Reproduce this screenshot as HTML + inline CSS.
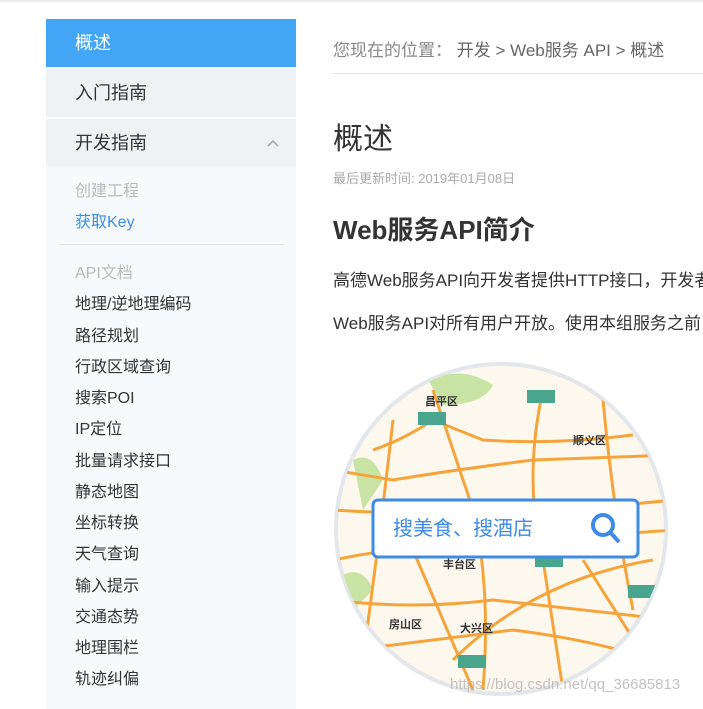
<!DOCTYPE html>
<html><head><meta charset="utf-8"><style>
body{margin:0;width:703px;height:704px;overflow:hidden;background:#fff;font-family:"Liberation Sans","Noto Sans CJK SC",sans-serif;position:relative}
.top{position:absolute;left:0;top:0;width:703px;height:4px;background:linear-gradient(#e8e8e8,#fff)}
.side{position:absolute;left:46px;top:19px;width:250px;height:690px;background:#f7fafd}
.it{position:absolute;left:0;width:250px;height:48px;line-height:48px;padding-left:29px;box-sizing:border-box;font-size:18px;color:#333;background:#eef2f5}
.s{position:absolute;left:29px;font-size:16px;color:#333;line-height:20px}
.g{color:#bbb}
.bc{position:absolute;left:333px;top:36px;font-size:17px;color:#888;white-space:nowrap}
.bc b{font-weight:normal;color:#666}
</style></head><body>
<div class="top"></div>
<div class="side">
<div class="it" style="top:0;background:#42a5f5;color:#fff">概述</div>
<div class="it" style="top:50px">入门指南</div>
<div class="it" style="top:100px">开发指南<svg style="position:absolute;right:17px;top:20px" width="12" height="8"><path d="M1 7L6 2L11 7" stroke="#aaa" stroke-width="1.6" fill="none"/></svg></div>
<div class="s g" style="top:163px">创建工程</div>
<div class="s" style="top:194px;color:#3a8ee6">获取Key</div>
<div style="position:absolute;left:13px;top:225px;width:225px;height:1px;background:#e2e8ee"></div>
<div class="s g" style="top:245px">API文档</div>
<div class="s" style="top:276px">地理/逆地理编码</div>
<div class="s" style="top:308px">路径规划</div>
<div class="s" style="top:339px">行政区域查询</div>
<div class="s" style="top:370px">搜索POI</div>
<div class="s" style="top:401px">IP定位</div>
<div class="s" style="top:433px">批量请求接口</div>
<div class="s" style="top:464px">静态地图</div>
<div class="s" style="top:495px">坐标转换</div>
<div class="s" style="top:526px">天气查询</div>
<div class="s" style="top:558px">输入提示</div>
<div class="s" style="top:589px">交通态势</div>
<div class="s" style="top:620px">地理围栏</div>
<div class="s" style="top:651px">轨迹纠偏</div>
</div>
<div class="bc">您现在的位置：&nbsp;<b>开发 &gt; Web服务 API &gt; 概述</b></div>
<div style="position:absolute;left:333px;top:73px;width:370px;height:1px;background:#e5e5e5"></div>
<div style="position:absolute;left:333px;top:114px;font-size:30px;color:#333">概述</div>
<div style="position:absolute;left:333px;top:168px;font-size:13px;color:#aaa">最后更新时间: 2019年01月08日</div>
<div style="position:absolute;left:333px;top:210px;font-size:26px;font-weight:bold;color:#333;white-space:nowrap">Web服务API简介</div>
<div style="position:absolute;left:333px;top:266px;font-size:17px;color:#333;white-space:nowrap">高德Web服务API向开发者提供HTTP接口，开发者</div>
<div style="position:absolute;left:333px;top:309px;font-size:17px;color:#333;white-space:nowrap">Web服务API对所有用户开放。使用本组服务之前</div>
<svg style="position:absolute;left:333px;top:360px" width="340" height="340">
<defs><clipPath id="c"><circle cx="168" cy="169" r="164"/></clipPath></defs>
<circle cx="168" cy="169" r="165" fill="#fdf8ee" stroke="#e3e6ea" stroke-width="4"/>
<g clip-path="url(#c)" fill="none" stroke="#f5a43c" stroke-width="3">
<path fill="#c9e3a4" stroke="none" d="M95 20Q130 5 160 25Q150 45 110 45Z M20 100Q40 90 50 120L30 150Z M10 215Q30 205 40 230L20 250Z"/>
<path d="M40 90Q70 80 100 60L150 80Q220 85 300 75"/>
<path d="M0 110L60 120Q120 110 200 100L340 95"/>
<path d="M0 200Q100 180 200 180L340 170"/>
<path d="M0 240Q80 250 160 240L340 260"/>
<path d="M20 290Q100 280 180 270Q260 280 320 300"/>
<path d="M100 30L130 120Q160 200 150 330"/>
<path d="M60 60Q50 150 30 300"/>
<path d="M210 30Q190 120 210 200L230 330"/>
<path d="M270 40Q280 150 300 250"/>
<path d="M0 150Q150 160 340 140"/>
<path d="M120 300Q200 220 320 200"/>
<path d="M80 190L140 330"/>
<path d="M250 200L320 310"/>
</g>
<g clip-path="url(#c)" fill="#4aa58e">
<rect x="194" y="30" width="28" height="13"/><rect x="85" y="52" width="28" height="13"/><rect x="202" y="194" width="28" height="13"/><rect x="295" y="225" width="28" height="13"/><rect x="125" y="295" width="28" height="13"/>
</g>
<g font-size="11" fill="#333" font-weight="bold"><text x="92" y="45">昌平区</text><text x="240" y="84">顺义区</text><text x="110" y="208">丰台区</text><text x="56" y="268">房山区</text><text x="127" y="272">大兴区</text></g>
<rect x="40" y="140" width="265" height="57" rx="5" fill="#fff" stroke="#3d8be5" stroke-width="3"/>
<text x="60" y="175" font-size="20" fill="#3d8be5">搜美食、搜酒店</text>
<circle cx="270" cy="165" r="10" fill="none" stroke="#3d8be5" stroke-width="4"/><path d="M277 172L286 182" stroke="#3d8be5" stroke-width="4"/>
</svg>
<div style="position:absolute;left:450px;top:676px;font-size:15px;color:rgba(180,180,180,.8);white-space:nowrap">https://blog.csdn.net/qq_36685813</div>
</body></html>
